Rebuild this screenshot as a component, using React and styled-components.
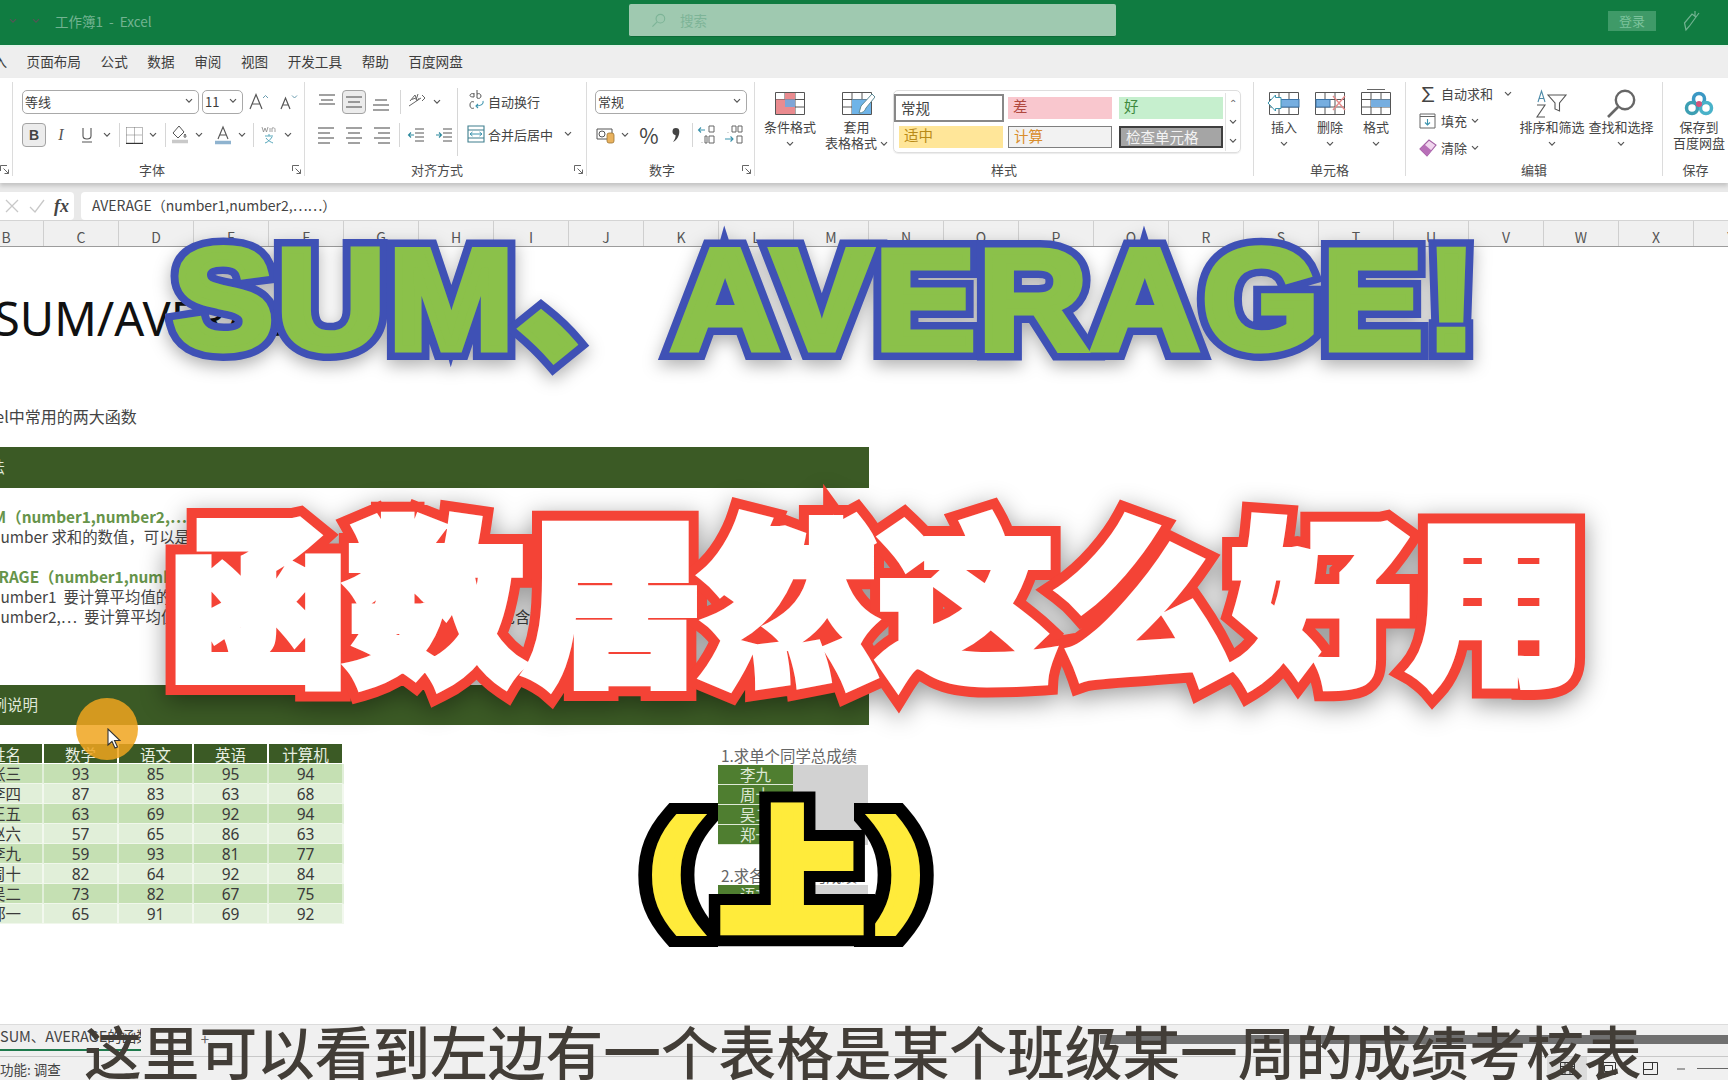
import React from "react"
import styled, { createGlobalStyle } from "styled-components"

const CJK = `"Noto Sans CJK SC", "Noto Sans", sans-serif`

const Global = createGlobalStyle`
  html, body { margin: 0; padding: 0; background: #fff; }
  body { font-family: ${CJK}; color: #444; }
`

const Page = styled.div`
  position: relative;
  width: 1728px;
  height: 1080px;
  overflow: hidden;
  display: flex;
  flex-direction: column;
  background: #fff;
`

/* ---- title bar ---- */
const TitleBar = styled.div`
  height: 45px;
  flex: none;
  box-sizing: border-box;
  padding-bottom: 4px;
  background: #107c41;
  display: flex;
  align-items: center;
`
const QuickAccess = styled.div`
  width: 629px;
  display: flex;
  align-items: center;
  padding-left: 9px;
  gap: 15px;
  box-sizing: border-box;
  color: #72b391;
  font-size: 13.5px;
`
const SearchBox = styled.div`
  width: 487px;
  height: 33px;
  box-sizing: border-box;
  background: #9fc9b0;
  border-radius: 2px;
  border-bottom: 1px solid #0c6b37;
  display: flex;
  align-items: center;
  gap: 14px;
  padding-left: 22px;
  color: #7db497;
  font-size: 13.5px;
`
const TitleRight = styled.div`
  flex: 1;
  display: flex;
  align-items: center;
  padding-left: 492px;
  gap: 27px;
`
const LoginButton = styled.div`
  width: 48px;
  height: 20px;
  background: #3f9a68;
  color: #7cc39c;
  font-size: 13px;
  line-height: 20px;
  text-align: center;
`

/* ---- menu ---- */
const MenuBar = styled.div`
  height: 33px;
  flex: none;
  box-sizing: border-box;
  background: #eeeeee;
  border-top: 2px solid #e2f3e9;
  padding-bottom: 4px;
  display: flex;
  align-items: center;
  gap: 19.6px;
  font-size: 13.6px;
  color: #3d3d3d;
`
const MenuStub = styled.span`
  width: 7px;
  overflow: hidden;
  direction: rtl;
`

/* ---- ribbon ---- */
const Ribbon = styled.div`
  height: 105px;
  flex: none;
  background: #fff;
  display: flex;
  align-items: flex-start;
  position: relative;
  white-space: nowrap;
  box-shadow: 0 3px 4px rgba(0, 0, 0, 0.16);
`
const Group = styled.div`
  width: ${(p) => p.$w}px;
  height: 94px;
  margin-top: 4px;
  box-sizing: border-box;
  flex: none;
  display: flex;
  flex-direction: column;
  border-right: ${(p) => (p.$last ? "none" : "1px solid #dcdcdc")};
`
const GroupBody = styled.div`
  height: 80px;
  flex: none;
  display: flex;
  padding-left: ${(p) => p.$pad || 0}px;
`
const GroupLabel = styled.div`
  height: 14px;
  line-height: 16px;
  font-size: 13px;
  color: #4a4a4a;
  display: flex;
  justify-content: ${(p) => (p.$start === undefined ? "center" : "flex-start")};
  padding-left: ${(p) => p.$start || 0}px;
`
const Launcher = styled.span`
  margin-left: auto;
  padding-right: 2px;
`
const Stack = styled.div`
  padding-top: 8px;
  display: flex;
  flex-direction: column;
  gap: 9px;
`
const Row = styled.div`
  height: 24px;
  display: flex;
  align-items: center;
  gap: ${(p) => p.$gap || 0}px;
`
const Combo = styled.div`
  width: ${(p) => p.$w}px;
  height: 24px;
  box-sizing: border-box;
  border: 1px solid #a9a9a9;
  border-radius: 5px;
  display: flex;
  align-items: center;
  justify-content: space-between;
  padding: 0 5px 2px 2px;
  font-size: 13px;
  color: #3c3c3c;
  background: #fff;
`
const Slot = styled.div`
  width: ${(p) => p.$w}px;
  height: 24px;
  flex: none;
  box-sizing: border-box;
  display: flex;
  align-items: center;
  justify-content: center;
  font-size: ${(p) => p.$size || 14}px;
  color: #444;
  ${(p) =>
    p.$on
      ? "background:#ececec;border:1px solid #a3a3a3;border-radius:4px;"
      : ""}
`
const Sep = styled.div`
  width: 1px;
  height: ${(p) => p.$h || 24}px;
  background: #d6d6d6;
`
const BoldB = styled.span`
  font-family: "Liberation Sans", sans-serif;
  font-weight: 700;
  font-size: 14px;
`
const ItalicI = styled.span`
  font-family: "Liberation Serif", serif;
  font-style: italic;
  font-size: 16px;
  color: #555;
`
const AlignBlock = styled.div`
  width: 142px;
  margin-left: 10px;
  height: 66px;
  margin-top: 6px;
  padding-top: 2px;
  border-right: 1px solid #d6d6d6;
  display: flex;
  flex-direction: column;
  gap: 9px;
`
const TextAction = styled.div`
  display: flex;
  align-items: center;
  gap: 2px;
  font-size: 13px;
  color: #444;
  height: 24px;
  padding-bottom: 2px;
  box-sizing: border-box;
`
const WrapBlock = styled.div`
  padding: 8px 0 0 8px;
  display: flex;
  flex-direction: column;
  gap: 9px;
`
const NumberBlock = styled.div`
  padding: 8px 0 0 8px;
  display: flex;
  flex-direction: column;
  gap: 9px;
`
const BigButton = styled.div`
  width: ${(p) => p.$w}px;
  flex: none;
  padding-top: 7px;
  display: flex;
  flex-direction: column;
  align-items: center;
  font-size: 13px;
  line-height: 16.5px;
  color: #444;
  text-align: center;
`
const BigIcon = styled.div`
  height: 29px;
  display: flex;
  align-items: center;
  margin-bottom: 1px;
`
const CaretRow = styled.div`
  height: 16px;
  display: flex;
  align-items: center;
  justify-content: center;
  gap: 3px;
`
const Gallery = styled.div`
  width: 348px;
  height: 63px;
  margin: 8px 0 0 5px;
  box-sizing: border-box;
  border: 1px solid #dedede;
  border-radius: 5px;
  display: grid;
  grid-template-columns: 114px 111px 106px 15px;
  grid-template-rows: 30px 28px;
  padding-top: 2px;
  box-shadow: 0 1px 1px rgba(0, 0, 0, 0.08);
`
const StyleCell = styled.div`
  width: ${(p) => p.$w || 104}px;
  height: ${(p) => p.$h || 22}px;
  box-sizing: border-box;
  align-self: center;
  justify-self: ${(p) => (p.$center ? "center" : "start")};
  background: ${(p) => p.$bg};
  color: ${(p) => p.$fg};
  border: ${(p) => p.$border || "none"};
  font-size: 14.5px;
  line-height: ${(p) => (p.$h || 22) - 4}px;
  padding-left: 5px;
`
const GalleryScroll = styled.div`
  grid-column: 4;
  grid-row: 1 / span 2;
  border-left: 1px solid #e2e2e2;
  display: grid;
  grid-template-rows: 1fr 1fr 1fr;
  justify-items: center;
  align-items: center;
  font-size: 10px;
  color: #666;
`
const EditList = styled.div`
  width: 111px;
  flex: none;
  box-sizing: border-box;
  margin-top: -2px;
  padding-left: 13px;
  display: flex;
  flex-direction: column;
`
const EditItem = styled.div`
  height: 27px;
  display: flex;
  align-items: center;
  gap: 4px;
  font-size: 13px;
  color: #444;
`

/* ---- formula bar ---- */
const FormulaRow = styled.div`
  height: 37px;
  flex: none;
  box-sizing: border-box;
  background: #e9e9e9;
  padding-top: 9px;
  display: flex;
  gap: 7px;
`
const FormulaTools = styled.div`
  width: 74px;
  height: 28px;
  background: #fff;
  border-radius: 0 4px 4px 0;
  display: flex;
  align-items: center;
  gap: 9px;
  padding-left: 4px;
  box-sizing: border-box;
`
const Fx = styled.span`
  font-family: "Liberation Serif", serif;
  font-style: italic;
  font-weight: 700;
  font-size: 18px;
  color: #444;
`
const FormulaInput = styled.div`
  flex: 1;
  height: 28px;
  box-sizing: border-box;
  background: #fff;
  border-radius: 4px 0 0 4px;
  padding-left: 11px;
  line-height: 26px;
  font-size: 14px;
  color: #444;
`

/* ---- sheet ---- */
const ColumnHeaders = styled.div`
  height: 27px;
  flex: none;
  box-sizing: border-box;
  display: flex;
  margin-left: -31px;
  background: #f0f0f0;
  border-top: 1px solid #d4d4d4;
  border-bottom: 1px solid #9c9c9c;
`
const ColumnHead = styled.div`
  width: 75px;
  flex: none;
  box-sizing: border-box;
  border-right: 1px solid #cfcfcf;
  text-align: center;
  padding-top: 3px;
  line-height: 26px;
  font-size: 14px;
  color: #555;
`
const Sheet = styled.div`
  height: 777px;
  flex: none;
  overflow: hidden;
  background: #fff;
  display: flex;
  flex-direction: column;
`
const BigHeading = styled.div`
  margin: 41px 0 2px -6px;
  height: 60px;
  line-height: 60px;
  font-family: "Noto Sans", sans-serif;
  font-size: 47px;
  color: #111;
  white-space: nowrap;
`
const Note = styled.div`
  margin-top: ${(p) => p.$top || 0}px;
  margin-left: ${(p) => p.$left || 0}px;
  height: 20px;
  line-height: 16px;
  font-size: ${(p) => p.$size || 15.4}px;
  color: ${(p) => (p.$green ? "#66944a" : "#444")};
  font-weight: ${(p) => (p.$green ? 700 : 400)};
  white-space: nowrap;
`
const Banner = styled.div`
  width: 869px;
  height: ${(p) => p.$h}px;
  flex: none;
  margin-top: ${(p) => p.$top}px;
  background: #3b5a25;
  color: #dfe8d8;
  font-size: 15.5px;
  line-height: ${(p) => p.$h - 2}px;
  overflow: hidden;
  white-space: nowrap;
`
const BannerText = styled.div`
  margin-left: ${(p) => p.$left}px;
`
const Lower = styled.div`
  display: flex;
  margin-top: 19px;
`
const ScoreTable = styled.div`
  display: grid;
  grid-template-columns: repeat(5, 75px);
  grid-auto-rows: 20px;
  margin-left: -31px;
  height: 180px;
`
const HeadCell = styled.div`
  box-sizing: border-box;
  background: #3b5a25;
  color: #e8efe2;
  border-right: 2px solid #fff;
  border-bottom: 1px solid #fff;
  text-align: center;
  font-size: 15.5px;
  line-height: 21px;
  overflow: hidden;
`
const DataCell = styled.div`
  box-sizing: border-box;
  background: ${(p) => (p.$odd ? "#c5e0b3" : "#e1efd9")};
  border-right: 2px solid ${(p) => (p.$odd ? "#e1efd9" : "#f2f8ee")};
  border-bottom: 1px solid #f0f7eb;
  text-align: center;
  font-family: "Noto Sans", ${CJK};
  font-size: 15.5px;
  line-height: 20px;
  color: #3a3a3a;
`
const SidePanel = styled.div`
  margin-left: 374px;
  width: 150px;
  display: flex;
  flex-direction: column;
`
const SideTitle = styled.div`
  height: 19px;
  margin-top: ${(p) => p.$top || 0}px;
  padding-right: 8px;
  line-height: 18px;
  font-size: 15.4px;
  color: #666;
  text-align: center;
  white-space: nowrap;
`
const SideGrid = styled.div`
  display: grid;
  grid-template-columns: 75px 75px;
  grid-auto-rows: 20px;
`
const SideName = styled.div`
  box-sizing: border-box;
  background: #4f7e30;
  color: #dce8d3;
  border-bottom: 1px solid #dfe9d8;
  text-align: center;
  font-size: 15.5px;
  line-height: 19px;
`
const SideValue = styled.div`
  background: #d2d2d2;
`

/* ---- bottom ---- */
const TabBar = styled.div`
  height: 33px;
  flex: none;
  box-sizing: border-box;
  background: #f0f0f0;
  border-top: 1px solid #dcdcdc;
  border-bottom: 1px solid #c8c8c8;
  display: flex;
  align-items: flex-start;
`
const SheetTab = styled.div`
  width: 141px;
  height: 24px;
  flex: none;
  overflow: hidden;
  border-bottom: 2px solid #1f7a4d;
  font-size: 14.5px;
  line-height: 22px;
  white-space: nowrap;
  color: #444;
`
const AddTab = styled.div`
  width: 68px;
  text-align: right;
  font-size: 15px;
  line-height: 28px;
  color: #666;
`
const ScrollThumb = styled.div`
  margin: 10px 0 0 891px;
  flex: 1;
  height: 9px;
  background: #707070;
`
const StatusBar = styled.div`
  height: 23px;
  flex: none;
  background: #f0f0f0;
  display: flex;
  align-items: center;
  font-size: 13.5px;
  color: #444;
`
const StatusText = styled.div`
  width: 1547px;
  flex: none;
  white-space: nowrap;
  overflow: hidden;
`
const ViewButton = styled.div`
  width: ${(p) => p.$w}px;
  height: 23px;
  flex: none;
  display: flex;
  align-items: center;
  justify-content: center;
  background: ${(p) => (p.$on ? "#dcdcdc" : "transparent")};
`
const ZoomLine = styled.div`
  flex: 1;
  height: 1px;
  background: #666;
  margin-left: 6px;
`

/* ---- video overlay ---- */
const Outlined = styled.div`
  position: absolute;
  left: ${(p) => p.$x}px;
  top: ${(p) => p.$y}px;
  white-space: nowrap;
  font-family: ${(p) => p.$font};
  font-weight: 900;
  font-size: ${(p) => p.$size}px;
  line-height: 1;
  letter-spacing: ${(p) => p.$track || 0}px;
  color: ${(p) => p.$fill};
  -webkit-text-stroke: ${(p) => p.$outer}px ${(p) => p.$edge};
  transform-origin: 0 0;
  transform: scaleX(${(p) => p.$sx || 1});
  filter: drop-shadow(0 6px ${(p) => p.$blur || 8}px rgba(0, 0, 0, ${(p) => p.$alpha ?? 0.35}));
  &::after {
    content: attr(data-text);
    position: absolute;
    left: 0;
    top: 0;
    -webkit-text-stroke: ${(p) => p.$inner}px ${(p) => p.$fill};
  }
`
const CaptionLine = styled.div`
  position: absolute;
  left: 84px;
  top: 1016px;
  font-size: 57.7px;
  line-height: 68px;
  font-weight: 500;
  color: #423d37;
  white-space: nowrap;
`
const CursorSpot = styled.div`
  position: absolute;
  left: 76px;
  top: 698px;
  width: 62px;
  height: 62px;
  border-radius: 50%;
  background: rgba(240, 165, 30, 0.85);
`
const CursorArrow = styled.svg`
  position: absolute;
  left: 107px;
  top: 728px;
`

/* ---- small drawings ---- */
const Chevron = () => (
  <svg width="8" height="6" viewBox="0 0 8 6">
    <path d="M1 1.2 L4 4.2 L7 1.2" fill="none" stroke="#555" strokeWidth="1.2" />
  </svg>
)
const Corner = () => (
  <svg width="10" height="10" viewBox="0 0 10 10">
    <path d="M.5 6V.5H7M3.5 3.5 8.5 8.5M8.5 4.5V8.5H4.5" fill="none" stroke="#666" strokeWidth="1" />
  </svg>
)
const Lines = ({ rows, color = "#555" }) => (
  <svg width="20" height="20" viewBox="0 0 20 20">
    {rows.map((r, i) => (
      <path key={i} d={`M${r[0]} ${r[2]}H${r[1]}`} stroke={color} strokeWidth="1.1" />
    ))}
  </svg>
)
const Indent = ({ flip }) => (
  <svg width="18" height="16" viewBox="0 0 18 16">
    <path d="M8 2H17M8 6H17M8 10H17M8 14H17" stroke="#555" strokeWidth="1" />
    <path d={flip ? "M1 8H6M4 5.5 6.5 8 4 10.5" : "M7 8H1.5M4 5.5 1.5 8 4 10.5"} fill="none" stroke="#2d8a9e" strokeWidth="1.1" />
  </svg>
)
const Cells = ({ children, w = 30, h = 23 }) => (
  <svg width={w + 6} height={h + 6} viewBox="-3 -3 36 29">
    <path d="M.5.5H29.5V22.5H.5ZM.5 7.5H29.5M.5 15H29.5M10 .5V22.5M20 .5V22.5" fill="#fff" stroke="#555" strokeWidth="1" />
    {children}
  </svg>
)
const Search = ({ color = "#7db497", size = 15 }) => (
  <svg width={size} height={size} viewBox="0 0 16 16">
    <circle cx="10" cy="6" r="4.6" fill="none" stroke={color} strokeWidth="1.2" />
    <path d="M6.5 9.5 1.5 14.5" stroke={color} strokeWidth="1.3" />
  </svg>
)
const FontGrow = ({ big }) => (
  <svg width="22" height="20" viewBox="0 0 22 20">
    <path
      d={big ? "M2 17 8 2.5 14 17M4.2 12H11.8" : "M4 17 8.5 6 13 17M5.6 13H11.4"}
      fill="none"
      stroke="#555"
      strokeWidth="1.2"
    />
    <path d={big ? "M15 6 17.5 3.5 20 6" : "M15 3.5 17.5 6 20 3.5"} fill="none" stroke="#6b9db0" strokeWidth="1" />
  </svg>
)

const COLS = "BCDEFGHIJKLMNOPQRSTUVWXY".split("")
const SCORES = [
  ["张三", 93, 85, 95, 94],
  ["李四", 87, 83, 63, 68],
  ["王五", 63, 69, 92, 94],
  ["赵六", 57, 65, 86, 63],
  ["李九", 59, 93, 81, 77],
  ["周十", 82, 64, 92, 84],
  ["吴二", 73, 82, 67, 75],
  ["郑一", 65, 91, 69, 92],
]
const MENU = ["页面布局", "公式", "数据", "审阅", "视图", "开发工具", "帮助", "百度网盘"]

const Label = ({ text, launcher, start }) => (
  <GroupLabel $start={start}>
    {text ? <span>{text}</span> : null}
    {launcher ? (
      <Launcher>
        <Corner />
      </Launcher>
    ) : null}
  </GroupLabel>
)

export default function App() {
  return (
    <Page>
      <Global />
      <TitleBar>
        <QuickAccess>
          <Chevron />
          <Chevron />
          <span>工作簿1&nbsp;&nbsp;-&nbsp;&nbsp;Excel</span>
        </QuickAccess>
        <SearchBox>
          <Search />
          搜索
        </SearchBox>
        <TitleRight>
          <LoginButton>登录</LoginButton>
          <svg width="18" height="22" viewBox="0 0 18 22">
            <path d="M3 20 1.5 13 9 4l4 3-6.500 9ZM12 1v5M16 3l-3 4" fill="none" stroke="#72b391" strokeWidth="1.2" />
          </svg>
        </TitleRight>
      </TitleBar>

      <MenuBar>
        <MenuStub>入</MenuStub>
        {MENU.map((m) => (
          <span key={m}>{m}</span>
        ))}
      </MenuBar>

      <Ribbon>
        <Group $w={13}>
          <GroupBody />
          <Label launcher start={0} />
        </Group>

        <Group $w={292}>
          <GroupBody $pad={9}>
            <Stack>
              <Row $gap={3}>
                <Combo $w={177}>
                  等线
                  <Chevron />
                </Combo>
                <Combo $w={41}>
                  11
                  <Chevron />
                </Combo>
                <Slot $w={26}>
                  <FontGrow big />
                </Slot>
                <Slot $w={26}>
                  <FontGrow />
                </Slot>
              </Row>
              <Row>
                <Slot $w={24} $on>
                  <BoldB>B</BoldB>
                </Slot>
                <Slot $w={30}>
                  <ItalicI>I</ItalicI>
                </Slot>
                <Slot $w={22}>
                  <svg width="14" height="18" viewBox="0 0 14 18">
                    <path d="M3 2V10C3 14 11 14 11 10V2M2 16H12" fill="none" stroke="#555" strokeWidth="1.1" />
                  </svg>
                </Slot>
                <Slot $w={18}>
                  <Chevron />
                </Slot>
                <Slot $w={6}>
                  <Sep />
                </Slot>
                <Slot $w={24}>
                  <svg width="17" height="17" viewBox="0 0 17 17">
                    <path d="M.5.5H16.5M.5 8H16.5M8.5.5V16M.5.5V16M16.5.5V16" fill="none" stroke="#777" strokeWidth="1" strokeDasharray="1 1" />
                    <path d="M0 16.5H17" stroke="#333" strokeWidth="1.4" />
                  </svg>
                </Slot>
                <Slot $w={14}>
                  <Chevron />
                </Slot>
                <Slot $w={10}>
                  <Sep />
                </Slot>
                <Slot $w={20}>
                  <svg width="18" height="20" viewBox="0 0 18 20">
                    <path d="M8 1 2 8l5 5 6-6ZM14 9c-1 2-1.500 3 0 3.500 1.500-.5 1-1.500 0-3.500Z" fill="none" stroke="#555" strokeWidth="1" />
                    <path d="M1 16.500H17" stroke="#c9c9c9" strokeWidth="3.500" />
                  </svg>
                </Slot>
                <Slot $w={18}>
                  <Chevron />
                </Slot>
                <Slot $w={30}>
                  <svg width="18" height="20" viewBox="0 0 18 20">
                    <path d="M4 14 9 2 14 14M5.500 10H12.500" fill="none" stroke="#555" strokeWidth="1.100" />
                    <path d="M1 17.500H17" stroke="#8fb3cf" strokeWidth="3.500" />
                  </svg>
                </Slot>
                <Slot $w={8}>
                  <Chevron />
                </Slot>
                <Slot $w={14}>
                  <Sep />
                </Slot>
                <Slot $w={18}>
                  <svg width="18" height="20" viewBox="0 0 18 20">
                    <path d="M2 2 3.500 7 5 3 6.500 7 8 2M10 7V3M12 7V3c2-.5 3 0 3 1.500V7" fill="none" stroke="#888" strokeWidth=".8" />
                    <path d="M5 11H13M9 9V11M6 13C8 16 11 17 13 18M12 12C10 15 8 17 5 18" fill="none" stroke="#58a8bc" strokeWidth="1" />
                  </svg>
                </Slot>
                <Slot $w={20}>
                  <Chevron />
                </Slot>
              </Row>
            </Stack>
          </GroupBody>
          <Label text="字体" launcher start={126} />
        </Group>

        <Group $w={282}>
          <GroupBody>
            <AlignBlock>
              <Row $gap={3}>
                <Slot $w={24}>
                  <Lines rows={[[2, 18, 3], [4, 16, 8], [2, 18, 12]]} />
                </Slot>
                <Slot $w={24} $on>
                  <Lines rows={[[2, 18, 5], [4, 16, 10], [2, 18, 15]]} />
                </Slot>
                <Slot $w={24}>
                  <Lines rows={[[4, 16, 8], [2, 18, 13], [2, 18, 18]]} />
                </Slot>
                <Slot $w={8}>
                  <Sep />
                </Slot>
                <Slot $w={20} $size={11}>
                  <svg width="20" height="20" viewBox="0 0 20 20">
                    <path d="M3 9 8 3 10 8M4.500 7.500 9 6M11 2 9 8c1 1 3 0 3-2M2 14 14 6M15 3 18 6 15 9" fill="none" stroke="#666" strokeWidth="1" />
                  </svg>
                </Slot>
                <Slot $w={14}>
                  <Chevron />
                </Slot>
              </Row>
              <Row $gap={3}>
                <Slot $w={24}>
                  <Lines rows={[[1, 17, 3], [1, 13, 8], [1, 17, 13], [1, 13, 18]]} />
                </Slot>
                <Slot $w={24}>
                  <Lines rows={[[2, 18, 3], [4, 16, 8], [2, 18, 13], [4, 16, 18]]} />
                </Slot>
                <Slot $w={24}>
                  <Lines rows={[[3, 19, 3], [7, 19, 8], [3, 19, 13], [7, 19, 18]]} />
                </Slot>
                <Slot $w={6}>
                  <Sep />
                </Slot>
                <Slot $w={22}>
                  <Indent />
                </Slot>
                <Slot $w={28}>
                  <Indent flip />
                </Slot>
              </Row>
            </AlignBlock>
            <WrapBlock>
              <TextAction>
                <svg width="20" height="24" viewBox="0 0 20 24">
                  <path d="M8 5c-2-1-4 0-4 1.500S7 8 8 8V4M11 1V9M11 5c2-1 4 0 4 2s-2 3-4 2M8 13c-2-1-4 0-4 3s2 4 4 3" fill="none" stroke="#555" strokeWidth="1" />
                  <path d="M17 12c1 3-2 5-7 5M12 15 10 17 12 19" fill="none" stroke="#3b93ad" strokeWidth="1.100" />
                </svg>
                自动换行
              </TextAction>
              <TextAction>
                <svg width="20" height="20" viewBox="0 0 20 20">
                  <path d="M2 2H18V18H2ZM2 6H18M2 14H18" fill="none" stroke="#3f7f8e" strokeWidth="1.100" />
                  <path d="M4 10H16M6.500 8 4 10 6.500 12M13.500 8 16 10 13.500 12" fill="none" stroke="#3b93ad" strokeWidth="1" />
                </svg>
                合并后居中
                <Slot $w={26}>
                  <Chevron />
                </Slot>
              </TextAction>
            </WrapBlock>
          </GroupBody>
          <Label text="对齐方式" launcher start={106} />
        </Group>

        <Group $w={168}>
          <GroupBody>
            <NumberBlock>
              <Combo $w={152}>
                常规
                <Chevron />
              </Combo>
              <Row>
                <Slot $w={22}>
                  <svg width="20" height="18" viewBox="0 0 20 18">
                    <path d="M1 3H16V13H1Z" fill="none" stroke="#555" strokeWidth="1" />
                    <circle cx="6" cy="8" r="3" fill="none" stroke="#555" />
                    <rect x="11" y="7" width="7" height="10" rx="2" fill="#e9b25e" stroke="#9c7434" strokeWidth=".8" />
                  </svg>
                </Slot>
                <Slot $w={16}>
                  <Chevron />
                </Slot>
                <Slot $w={32} $size={21}>
                  %
                </Slot>
                <Slot $w={22}>
                  <svg width="10" height="16" viewBox="0 0 10 16">
                    <path d="M1.500 4.500a3.300 3.300 0 1 1 6.800 0C8.300 9 6 13 2 15 4 12 4.800 10 4.500 8 2.800 8 1.500 6.500 1.500 4.500Z" fill="#444" />
                  </svg>
                </Slot>
                <Slot $w={10}>
                  <Sep />
                </Slot>
                <Slot $w={20}>
                  <svg width="20" height="20" viewBox="0 0 20 20">
                    <path d="M8 5H1.500M4 2.500 1.500 5 4 7.500" fill="none" stroke="#3b93ad" strokeWidth="1.100" />
                    <path d="M12 1h5v6h-5ZM12 11h5v7h-5ZM5 17.500v.5M8 11H10V18H8Z" fill="none" stroke="#666" strokeWidth="1" />
                  </svg>
                </Slot>
                <Slot $w={34}>
                  <svg width="20" height="20" viewBox="0 0 20 20">
                    <path d="M1 14H9M6.500 11.500 9 14 6.500 16.500" fill="none" stroke="#3b93ad" strokeWidth="1.100" />
                    <path d="M8 1H12V7H8ZM14 1h4v6h-4ZM13 11h5v7h-5ZM4 7V7.500" fill="none" stroke="#666" strokeWidth="1" />
                  </svg>
                </Slot>
              </Row>
            </NumberBlock>
          </GroupBody>
          <Label text="数字" launcher start={62} />
        </Group>

        <Group $w={499}>
          <GroupBody>
            <BigButton $w={70}>
              <BigIcon>
                <Cells>
                  <rect x="10" y="1" width="10" height="6.500" fill="#ea8b8f" />
                  <rect x="1" y="7.500" width="9" height="7.500" fill="#ea8b8f" />
                  <rect x="10" y="7.500" width="10" height="7.500" fill="#7fa5d6" />
                  <rect x="1" y="15" width="19" height="7" fill="#ea8b8f" />
                </Cells>
              </BigIcon>
              条件格式
              <CaretRow>
                <Chevron />
              </CaretRow>
            </BigButton>
            <BigButton $w={63}>
              <BigIcon>
                <Cells>
                  <rect x="10" y="7.500" width="19" height="14.500" fill="#6fb4e8" />
                  <path d="M30 2 19 14l-2 7c4 0 6-2 7-5L33 5Z" fill="#fff" stroke="#5d8a96" strokeWidth="1" />
                </Cells>
              </BigIcon>
              套用
              <CaretRow>
                表格格式
                <Chevron />
              </CaretRow>
            </BigButton>
            <Gallery>
              <StyleCell $w={110} $h={28} $bg="#fff" $fg="#444" $border="2px solid #888">
                常规
              </StyleCell>
              <StyleCell $bg="#f9c7ce" $fg="#b0493f">
                差
              </StyleCell>
              <StyleCell $bg="#c6efce" $fg="#3f8a3e">
                好
              </StyleCell>
              <StyleCell $bg="#ffe699" $fg="#b98a17" $center>
                适中
              </StyleCell>
              <StyleCell $bg="#f2f2f2" $fg="#d98d2c" $border="1px solid #7f7f7f">
                计算
              </StyleCell>
              <StyleCell $bg="#a5a5a5" $fg="#f3f3f3" $border="2px solid #3f3f3f">
                检查单元格
              </StyleCell>
              <GalleryScroll>
                <span>⌃</span>
                <Chevron />
                <Chevron />
              </GalleryScroll>
            </Gallery>
          </GroupBody>
          <Label text="样式" />
        </Group>

        <Group $w={152}>
          <GroupBody $pad={7}>
            <BigButton $w={46}>
              <BigIcon>
                <Cells>
                  <rect x="5" y="7.500" width="25" height="7.500" fill="#76aee0" stroke="#3c73a6" strokeWidth="1" />
                  <path d="M12 5.500H6.500V3L-1 11 6.500 19V16.500H12Z" fill="#fff" stroke="#3b93ad" strokeWidth="1" />
                </Cells>
              </BigIcon>
              插入
              <CaretRow>
                <Chevron />
              </CaretRow>
            </BigButton>
            <BigButton $w={46}>
              <BigIcon>
                <Cells>
                  <rect x="1" y="7.500" width="14" height="7.500" fill="#76aee0" stroke="#3c73a6" strokeWidth="1" />
                  <path d="M18 4 30 18M30 4 18 18" stroke="#e58a8a" strokeWidth="1.400" />
                </Cells>
              </BigIcon>
              删除
              <CaretRow>
                <Chevron />
              </CaretRow>
            </BigButton>
            <BigButton $w={46}>
              <BigIcon>
                <Cells>
                  <rect x="10" y="7.500" width="19" height="7.500" fill="#76aee0" />
                  <path d="M6-2.500H24" stroke="#666" strokeWidth="1" />
                </Cells>
              </BigIcon>
              格式
              <CaretRow>
                <Chevron />
              </CaretRow>
            </BigButton>
          </GroupBody>
          <Label text="单元格" />
        </Group>

        <Group $w={257}>
          <GroupBody>
            <EditList>
              <EditItem>
                <Slot $w={18} $size={20}>
                  ∑
                </Slot>
                自动求和
                <Slot $w={22}>
                  <Chevron />
                </Slot>
              </EditItem>
              <EditItem>
                <svg width="18" height="18" viewBox="0 0 18 18">
                  <path d="M1 2H16V16H1ZM1 4.500H16" fill="none" stroke="#666" strokeWidth="1" />
                  <path d="M8.500 7V13M6 10.500 8.500 13 11 10.500" fill="none" stroke="#3b93ad" strokeWidth="1.100" />
                </svg>
                填充
                <Chevron />
              </EditItem>
              <EditItem>
                <svg width="18" height="18" viewBox="0 0 18 18">
                  <path d="M1 10 10 1 17 6 8 17Z" fill="#f1d6ee" stroke="#a461a4" strokeWidth="1.100" />
                  <path d="M1 10 8 17 12.500 11.500 5.500 5.500Z" fill="#b86fb8" />
                </svg>
                清除
                <Chevron />
              </EditItem>
            </EditList>
            <BigButton $w={70}>
              <BigIcon>
                <svg width="34" height="30" viewBox="0 0 34 30">
                  <path d="M3 13 6.500 2 10 13M4 9.500H9" fill="none" stroke="#4d8aa8" strokeWidth="1.100" />
                  <path d="M2 16H10L2 28H10M13 6H31L24.500 14V22L20 20V14Z" fill="none" stroke="#555" strokeWidth="1.100" />
                </svg>
              </BigIcon>
              排序和筛选
              <CaretRow>
                <Chevron />
              </CaretRow>
            </BigButton>
            <BigButton $w={68}>
              <BigIcon>
                <Search color="#666" size={32} />
              </BigIcon>
              查找和选择
              <CaretRow>
                <Chevron />
              </CaretRow>
            </BigButton>
          </GroupBody>
          <Label text="编辑" />
        </Group>

        <Group $w={65} $last>
          <GroupBody>
            <BigButton $w={72}>
              <BigIcon>
                <svg width="30" height="28" viewBox="0 0 30 28">
                  <circle cx="15" cy="9" r="5.500" fill="none" stroke="#3b98c4" strokeWidth="3.500" />
                  <circle cx="8" cy="18" r="5.500" fill="none" stroke="#3d9fb3" strokeWidth="3.500" />
                  <circle cx="22" cy="18" r="5.500" fill="none" stroke="#49b2c9" strokeWidth="3.500" />
                  <circle cx="15" cy="14" r="3" fill="#d5537a" />
                </svg>
              </BigIcon>
              保存到
              <CaretRow>百度网盘</CaretRow>
            </BigButton>
          </GroupBody>
          <Label text="保存" />
        </Group>
      </Ribbon>

      <FormulaRow>
        <FormulaTools>
          <svg width="16" height="16" viewBox="0 0 16 16">
            <path d="M2 2 14 14M14 2 2 14" stroke="#c8c8c8" strokeWidth="1.300" />
          </svg>
          <svg width="16" height="16" viewBox="0 0 16 16">
            <path d="M1 9 6 14 15 2" fill="none" stroke="#c8c8c8" strokeWidth="1.300" />
          </svg>
          <Fx>fx</Fx>
        </FormulaTools>
        <FormulaInput>AVERAGE（number1,number2,……）</FormulaInput>
      </FormulaRow>

      <ColumnHeaders>
        {COLS.map((c) => (
          <ColumnHead key={c}>{c}</ColumnHead>
        ))}
      </ColumnHeaders>

      <Sheet>
        <BigHeading>SUM/AVERAGE</BigHeading>
        <Note $top={58} $left={-29} $size={16}>
          Excel中常用的两大函数
        </Note>
        <Banner $h={41} $top={19}>
          <BannerText $left={-26}>语法</BannerText>
        </Banner>
        <Note $top={20} $left={-28} $green>
          SUM（number1,number2,…）
        </Note>
        <Note $left={-9}>number 求和的数值，可以是数字、单元格引用</Note>
        <Note $top={20} $left={-30} $green>
          AVERAGE（number1,number2,…）
        </Note>
        <Note $left={-9}>number1 &nbsp;要计算平均值的第一个数字</Note>
        <Note $left={-9}>number2,… &nbsp;要计算平均值的其余数字、单元格引用或单元格区域，最多可包含255个</Note>
        <Banner $h={40} $top={57}>
          <BannerText $left={-24}>案例说明</BannerText>
        </Banner>
        <Lower>
          <ScoreTable>
            {["姓名", "数学", "语文", "英语", "计算机"].map((h) => (
              <HeadCell key={h}>{h}</HeadCell>
            ))}
            {SCORES.map((row, r) =>
              row.map((v, c) => (
                <DataCell key={`${r}-${c}`} $odd={r % 2 === 0}>
                  {v}
                </DataCell>
              ))
            )}
          </ScoreTable>
          <SidePanel>
            <SideTitle $top={2}>1.求单个同学总成绩</SideTitle>
            <SideGrid>
              {["李九", "周十", "吴二", "郑一"].map((n) => (
                <React.Fragment key={n}>
                  <SideName>{n}</SideName>
                  <SideValue />
                </React.Fragment>
              ))}
            </SideGrid>
            <SideTitle $top={21}>2.求各科目平均成绩</SideTitle>
            <SideGrid>
              {["语文", "数学", "英语"].map((n) => (
                <React.Fragment key={n}>
                  <SideName>{n}</SideName>
                  <SideValue />
                </React.Fragment>
              ))}
            </SideGrid>
          </SidePanel>
        </Lower>
      </Sheet>

      <TabBar>
        <SheetTab>SUM、AVERAGE的函数</SheetTab>
        <AddTab>+</AddTab>
        <ScrollThumb />
      </TabBar>
      <StatusBar>
        <StatusText>功能: 调查</StatusText>
        <ViewButton $w={40} $on>
          <svg width="15" height="13" viewBox="0 0 15 13">
            <path d="M.5.5H14.500V12.500H.5ZM.5 4.500H14.500M.5 8.500H14.500M5 .5V12.500M10 .5V12.500" fill="none" stroke="#333" />
          </svg>
        </ViewButton>
        <ViewButton $w={42}>
          <svg width="15" height="13" viewBox="0 0 15 13">
            <path d="M.5.5H14.500V12.500H.5ZM3.500 3.500H11.500V9.500H3.500Z" fill="none" stroke="#333" />
          </svg>
        </ViewButton>
        <ViewButton $w={42}>
          <svg width="15" height="13" viewBox="0 0 15 13">
            <path d="M.5.5H14.500V12.500H.5ZM9.500.5V7.500H.5" fill="none" stroke="#333" />
          </svg>
        </ViewButton>
        <ViewButton $w={20}>
          <svg width="8" height="2" viewBox="0 0 8 2">
            <path d="M0 1H8" stroke="#555" />
          </svg>
        </ViewButton>
        <ZoomLine />
      </StatusBar>

      <CursorSpot />
      <CursorArrow width="14" height="22" viewBox="0 0 14 22">
        <path d="M1 1V17L5 13.500 8 20 10.500 19 7.500 12.500H13Z" fill="#fff" stroke="#333" strokeWidth="1.100" />
      </CursorArrow>

      <Outlined
        data-text="SUM、AVERAGE!"
        $x={173}
        $y={229}
        $size={142}
        $sx={1.06}
        $track={3}
        $font={`"Liberation Sans", ${CJK}`}
        $fill="#8bc14a"
        $edge="#3f51b5"
        $outer={22}
        $inner={7}
        $blur={8}
        $alpha={0.3}
      >
        SUM、AVERAGE!
      </Outlined>
      <Outlined
        data-text="函数居然这么好用"
        $x={170}
        $y={504}
        $size={177}
        $font={CJK}
        $fill="#ffffff"
        $edge="#f44336"
        $outer={30}
        $inner={10}
        $blur={12}
        $alpha={0.4}
      >
        函数居然这么好用
      </Outlined>
      <Outlined
        data-text="("
        $x={648}
        $y={801}
        $size={125}
        $sx={1.25}
        $font={`"Liberation Sans", sans-serif`}
        $fill="#ffeb3b"
        $edge="#000000"
        $outer={28}
        $inner={6}
        $alpha={0}
      >
        (
      </Outlined>
      <Outlined
        data-text=")"
        $x={872}
        $y={801}
        $size={125}
        $sx={1.25}
        $font={`"Liberation Sans", sans-serif`}
        $fill="#ffeb3b"
        $edge="#000000"
        $outer={28}
        $inner={6}
        $alpha={0}
      >
        )
      </Outlined>
      <Outlined
        data-text="上"
        $x={720}
        $y={796}
        $size={137}
        $sx={1.05}
        $font={CJK}
        $fill="#ffeb3b"
        $edge="#000000"
        $outer={32}
        $inner={10}
        $alpha={0}
      >
        上
      </Outlined>
      <CaptionLine>这里可以看到左边有一个表格是某个班级某一周的成绩考核表</CaptionLine>
    </Page>
  )
}
